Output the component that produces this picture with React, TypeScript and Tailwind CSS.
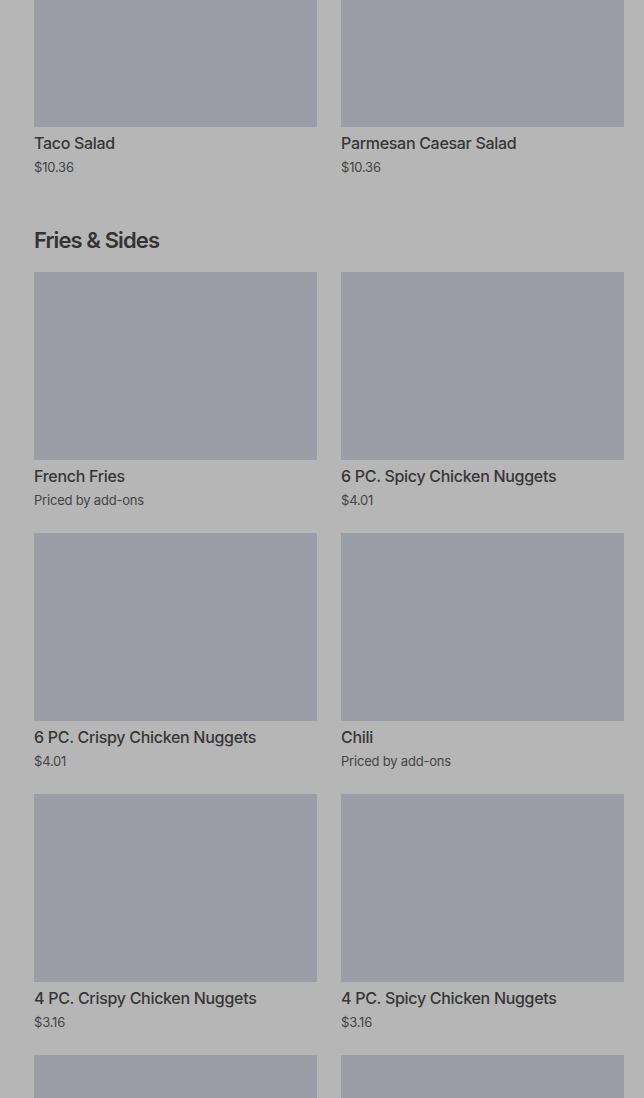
import React from 'react';

type Item = { name: string; price: string };

const salads: Item[] = [
  { name: 'Taco Salad', price: '$10.36' },
  { name: 'Parmesan Caesar Salad', price: '$10.36' },
];

const sides: Item[] = [
  { name: 'French Fries', price: 'Priced by add-ons' },
  { name: '6 PC. Spicy Chicken Nuggets', price: '$4.01' },
  { name: '6 PC. Crispy Chicken Nuggets', price: '$4.01' },
  { name: 'Chili', price: 'Priced by add-ons' },
  { name: '4 PC. Crispy Chicken Nuggets', price: '$3.16' },
  { name: '4 PC. Spicy Chicken Nuggets', price: '$3.16' },
  { name: '', price: '' },
  { name: '', price: '' },
];

const Card: React.FC<{ item: Item }> = ({ item }) => (
  <div className="flex flex-col">
    <div className="h-[188px] bg-[#9b9ea6]" />
    <div className="pt-[6px] text-[16px] leading-5 font-medium text-[#363636] tracking-[-0.3px]">{item.name}</div>
    <div className="mt-1 text-[13px] leading-5 text-[#444444] tracking-[-0.2px]">{item.price}</div>
  </div>
);

export default function App() {
  return (
    <div className="h-[1098px] overflow-hidden bg-[#b6b6b6] pl-[34px] pr-[20px]" style={{ fontFamily: 'Inter, "Noto Sans", sans-serif' }}>
      <div className="-mt-[61px] grid grid-cols-2 gap-x-6 gap-y-[23px]">
        {salads.map((s) => (
          <Card key={s.name} item={s} />
        ))}
      </div>
      <h2 className="mt-[49px] mb-[18px] text-[22px] leading-7 font-semibold text-[#333333] tracking-[-0.9px]">Fries &amp; Sides</h2>
      <div className="grid grid-cols-2 gap-x-6 gap-y-[23px]">
        {sides.map((s, i) => (
          <Card key={i} item={s} />
        ))}
      </div>
    </div>
  );
}
